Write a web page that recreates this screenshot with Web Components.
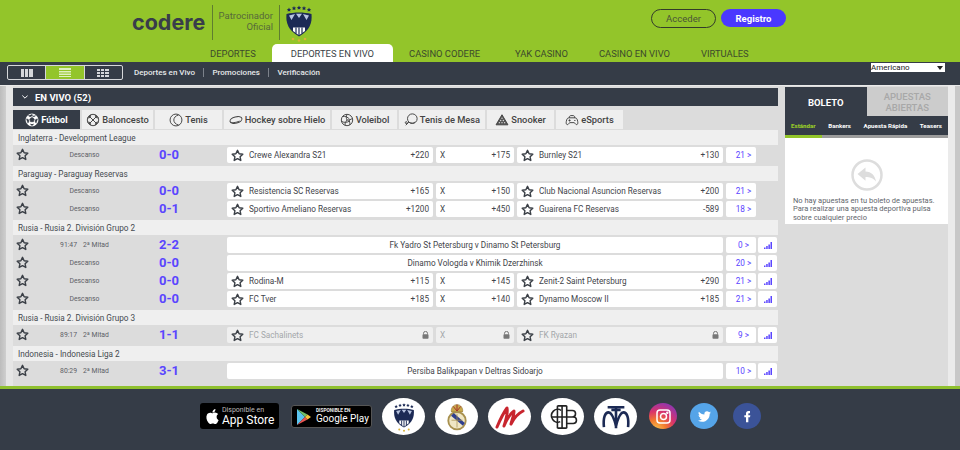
<!DOCTYPE html>
<html lang="es">
<head>
<meta charset="utf-8">
<title>Codere - Deportes en Vivo</title>
<style>
    html, body { margin: 0; height: 100%; overflow: hidden; }
    body { display: flex; flex-direction: column; height: 450px; font-family: Roboto, "Liberation Sans", sans-serif; }
</style>
</head>
<body>
<site-header></site-header>
<sub-bar></sub-bar>
<page-content>
    <live-panel count="52">
        <sport-tabs>
            <sport-tab icon="football" active>Fútbol</sport-tab>
            <sport-tab icon="basket" width="71">Baloncesto</sport-tab>
            <sport-tab icon="tennis">Tenis</sport-tab>
            <sport-tab icon="hockey" width="106">Hockey sobre Hielo</sport-tab>
            <sport-tab icon="volley" width="65">Voleibol</sport-tab>
            <sport-tab icon="paddle" width="86">Tenis de Mesa</sport-tab>
            <sport-tab icon="snooker">Snooker</sport-tab>
            <sport-tab icon="esports">eSports</sport-tab>
        </sport-tabs>
        <league-group name="Inglaterra - Development League">
            <event-row period="Descanso" score="0-0" home="Crewe Alexandra S21" home-odd="+220" draw="+175" away="Burnley S21" away-odd="+130" count="21"></event-row>
        </league-group>
        <league-group name="Paraguay - Paraguay Reservas">
            <event-row period="Descanso" score="0-0" home="Resistencia SC Reservas" home-odd="+165" draw="+150" away="Club Nacional Asuncion Reservas" away-odd="+200" count="21"></event-row>
            <event-row period="Descanso" score="0-1" home="Sportivo Ameliano Reservas" home-odd="+1200" draw="+450" away="Guairena FC Reservas" away-odd="-589" count="18"></event-row>
        </league-group>
        <league-group name="Rusia - Rusia 2. División Grupo 2">
            <event-row time="91:47" period="2ª Mitad" score="2-2" match="Fk Yadro St Petersburg v Dinamo St Petersburg" count="0" stats></event-row>
            <event-row period="Descanso" score="0-0" match="Dinamo Vologda v Khimik Dzerzhinsk" count="20" stats></event-row>
            <event-row period="Descanso" score="0-0" home="Rodina-M" home-odd="+115" draw="+145" away="Zenit-2 Saint Petersburg" away-odd="+290" count="21" stats></event-row>
            <event-row period="Descanso" score="0-0" home="FC Tver" home-odd="+185" draw="+140" away="Dynamo Moscow II" away-odd="+185" count="21" stats></event-row>
        </league-group>
        <league-group name="Rusia - Rusia 2. División Grupo 3">
            <event-row time="89:17" period="2ª Mitad" score="1-1" home="FC Sachalinets" away="FK Ryazan" count="9" stats locked></event-row>
        </league-group>
        <league-group name="Indonesia - Indonesia Liga 2">
            <event-row time="80:29" period="2ª Mitad" score="3-1" match="Persiba Balikpapan v Deltras Sidoarjo" count="10" stats></event-row>
        </league-group>
    </live-panel>
    <bet-slip></bet-slip>
</page-content>
<site-footer></site-footer>

<script>
const DARK = '#353c47';
const BLUE = '#5a45ff';

// Same crest is used in the header and in the footer
const CREST = `
    <path fill="#1c2a55" d="M4 3.500l.7 1.400 1.500.2-1.100 1 .3 1.500L4 6.900l-1.400.7.300-1.500-1.100-1 1.500-.2zM9 2l.7 1.400 1.500.2-1.100 1 .3 1.500L9 5.400l-1.400.7.300-1.500-1.100-1 1.500-.2zM14 1.500l.7 1.400 1.500.2-1.100 1 .3 1.500-1.400-.7-1.400.7.300-1.500-1.100-1 1.500-.2zM19 2l.7 1.400 1.500.2-1.100 1 .3 1.500-1.400-.7-1.400.7.300-1.500-1.100-1 1.500-.2zM24 3.500l.7 1.400 1.500.2-1.100 1 .3 1.500-1.400-.7-1.400.7.300-1.500-1.100-1 1.500-.2z"/>
    <path d="M1.500 10C9 8 19 8 26.500 10c.8 9-1.500 16-12.500 22.500C3 26 .7 19 1.500 10z" fill="#1c2a55"/>
    <path d="M4 11.500l6-1.500-3.500 6zM24 11.500l-6-1.500 3.500 6zM11 9.800h6L14 14z" fill="#b7c3e0"/>
    <path d="M8 23.500h12V27l-6 4.300L8 27z" fill="#fff"/>
    <path d="M11 23.500v6M14 23.500v8M17 23.500v6" stroke="#1c2a55" stroke-width="1.200"/>
    <g fill="#d9b23a"><circle cx="8" cy="35" r="1.300"/><circle cx="14" cy="36.500" r="1.300"/><circle cx="20" cy="35" r="1.300"/></g>`;

const STAR = `<svg width="13" height="13" viewBox="0 0 24 24" fill="none" stroke="#3a3f46" stroke-width="2.600" stroke-linejoin="round"><path d="M12 2.500l3 6.300 6.800.9-5 4.700 1.300 6.800-6.100-3.300-6.100 3.300 1.300-6.800-5-4.700 6.800-.9z"/></svg>`;

const SPORT_ICONS = {
    football: `<circle cx="8" cy="8" r="6.800" fill="#fff" stroke="#fff"/><path d="M8 5l2.600 1.900-1 3H6.400l-1-3zM8 1.300V3l-2 1.200L3.800 3M8 3l2 1.200L12.200 3M14.500 7l-2 .2-1 2 1.200 2.400M1.500 7l2 .2 1 2-1.200 2.400M6 12.500l2 1.800 2-1.800" fill="#353c47" stroke="#353c47" stroke-width=".8"/>`,
    basket: `<circle cx="8" cy="8" r="6.500"/><path d="M3.400 3.400l9.200 9.200M12.600 3.400l-9.200 9.200M5.200 2.200c.4 2.400-.6 3.600-3.600 3.400M10.800 2.200c-.4 2.400.6 3.600 3.600 3.400M5.200 13.800c.4-2.400-.6-3.600-3.600-3.400M10.800 13.800c-.4-2.400.6-3.600 3.600-3.400"/>`,
    tennis: `<circle cx="8" cy="8" r="6.800"/><path d="M11 2.300C7.500 3 5.500 5.500 5.500 8s2 5 5.500 5.700"/>`,
    hockey: `<ellipse cx="8" cy="8" rx="7" ry="3.600" transform="rotate(-15 8 8)"/><path d="M1.500 10c.8 1.600 6.500 1.200 10.500-.8" />`,
    volley: `<circle cx="8" cy="8" r="6.500"/><path d="M8 1.500c-1 2.500-1 4.500 0 6.500M8 8c2 .3 4.500-.4 6.300-2M8 8c-1.400 2-2.500 3.800-2.200 5.900M3 4c2.800-.6 6 .6 8 3.200M1.700 9.500c2.300 1.600 6.200 1.700 9.500-.4M11 13.500c.6-2-.1-4-.9-5.700"/>`,
    paddle: `<circle cx="9.500" cy="6.500" r="5.500"/><path d="M5.600 10.400l-3.600 3.600M6.500 11c2 .8 4 .8 6-.5"/><circle cx="2.600" cy="11" r="1.100"/>`,
    snooker: `<path d="M8 2l6.800 11.500H1.200z" fill="#555"/><g fill="#e0e0e0" stroke="none"><circle cx="8" cy="6" r=".8"/><circle cx="6.500" cy="8.500" r=".8"/><circle cx="9.500" cy="8.500" r=".8"/><circle cx="5" cy="11" r=".8"/><circle cx="8" cy="11" r=".8"/><circle cx="11" cy="11" r=".8"/></g>`,
    esports: `<path d="M4.500 5.500h7c1.800 0 2.500 1.500 3 4 .5 2.600-.2 3.800-1.300 3.800-1.200 0-1.700-2-2.700-2.300H5.500c-1 .3-1.500 2.300-2.700 2.300-1.100 0-1.800-1.200-1.300-3.800.5-2.500 1.200-4 3-4z"/><path d="M5 5.500V4c0-1.500 6-1.500 6 0v1.500M4 8.500h2.400M5.200 7.300v2.400M10.500 8.500h1.500"/>`
};

class SiteHeader extends HTMLElement {
    constructor() {
        super();
        this.attachShadow({ mode: 'open' });
    }

    connectedCallback() {
        this.shadowRoot.innerHTML = `
            <style>
                :host { display: block; flex: none; height: 62px; background: #93c52a; color: #3c4a2c; }
                .top { height: 44px; display: flex; align-items: flex-start; padding-left: 132px; }
                .logo { font: 700 21.500px/26px Inter, sans-serif; color: #383d4a; width: 80px; margin-top: 9px; white-space: nowrap; }
                .rule { width: 1px; height: 35px; background: #5f7d30; margin-top: 5px; }
                .sponsor { width: 60px; margin: 11px 6px 0 0; text-align: right; font-size: 9.500px; line-height: 10.500px; color: #566a3a; }
                svg { margin: 4px 0 0 5px; }
                .auth { margin-left: 338px; margin-top: 9px; display: flex; gap: 5px; font-size: 9.500px; }
                .auth span { width: 65px; height: 19px; box-sizing: border-box; border-radius: 10px; display: flex; align-items: center; justify-content: center; }
                .login { border: 1.500px solid #333c2a; color: #4a5438; }
                .register { background: #4a38ff; color: #fff; font-weight: 700; height: 18px !important; }
                nav { height: 18px; padding-left: 192.500px; display: flex; font-size: 9.400px; }
                nav span { padding: 4px 17.500px 0; box-sizing: border-box; white-space: nowrap; }
                nav .active { background: #fff; border-radius: 5px 5px 0 0; padding: 4px 19px 0; margin: 0 -1.500px; color: #3a3f46; }
                nav span:nth-child(n+4) { padding: 4px 15.500px 0; margin-left: 2px; }
                nav span:nth-child(n+5) { margin-left: 0; }
            </style>
            <div class="top">
                <div class="logo">codere</div>
                <div class="rule"></div>
                <div class="sponsor">Patrocinador Oficial</div>
                <div class="rule"></div>
                <svg width="28" height="38" viewBox="0 0 28 38">${CREST}</svg>
                <div class="auth"><span class="login">Acceder</span><span class="register">Registro</span></div>
            </div>
            <nav>
                <span>DEPORTES</span>
                <span class="active">DEPORTES EN VIVO</span>
                <span>CASINO CODERE</span>
                <span>YAK CASINO</span>
                <span>CASINO EN VIVO</span>
                <span>VIRTUALES</span>
            </nav>
        `;
    }
}

class SubBar extends HTMLElement {
    constructor() {
        super();
        this.attachShadow({ mode: 'open' });
    }

    connectedCallback() {
        this.shadowRoot.innerHTML = `
            <style>
                :host { display: flex; flex: none; height: 23px; background: ${DARK}; color: #e6e8ea; font-size: 8px; font-weight: 500; }
                .views { display: flex; margin: 3px 0 0 7px; width: 116px; height: 15px; box-sizing: border-box; border: 1px solid #d5d7da; border-radius: 2px; }
                .views div { flex: 1; display: flex; align-items: center; justify-content: center; }
                .views div + div { border-left: 1px solid #d5d7da; }
                .views .on { background: #93c52a; }
                .links { display: flex; margin: 3px 0 0 11px; height: 15px; align-items: center; }
                .links span + span { margin-left: 8px; padding-left: 8.500px; border-left: 1px solid #7c828b; }
                .odds { margin: 1px 15px 0 auto; width: 74px; height: 9px; background: #fff; color: #222; font-size: 8px; font-weight: 400; line-height: 10px; display: flex; justify-content: space-between; align-items: center; }
                .odds i { width: 0; height: 0; border: 3.500px solid transparent; border-top: 4px solid #222; border-bottom: 0; margin-right: 2px; }
            </style>
            <div class="views">
                <div><svg width="12" height="8" fill="#d5d7da"><path d="M0 0h3v8H0zM4 0h3v8H4zM8 0h4v8H8z"/></svg></div>
                <div class="on"><svg width="12" height="9" fill="#dff0c0"><path d="M0 0h12v2H0zM0 3h12v1.500H0zM0 5.500h12V7H0zM0 8h12v1H0z"/></svg></div>
                <div><svg width="12" height="8" fill="#d5d7da"><path d="M0 0h3v2H0zM4 0h3v2H4zM8 0h4v2H8zM0 3h3v2H0zM4 3h3v2H4zM8 3h4v2H8zM0 6h3v2H0zM4 6h3v2H4zM8 6h4v2H8z"/></svg></div>
            </div>
            <div class="links"><span>Deportes en Vivo</span><span>Promociones</span><span>Verificación</span></div>
            <div class="odds">Americano<i></i></div>
        `;
    }
}

class PageContent extends HTMLElement {
    constructor() {
        super();
        this.attachShadow({ mode: 'open' });
        this.shadowRoot.innerHTML = `
            <style>
                :host {
                    display: flex; flex: 1; min-height: 0; gap: 7px;
                    padding: 2px 12px 0 13px;
                    background: linear-gradient(90deg, #bcbcbc 0, #cfcfcf 6px, #e6e6e6 6px, #e6e6e6 13px, #dcdcdc 13px, #dcdcdc 948px, #ebebeb 948px, #ebebeb 955px, #c8c8c8 955px);
                    border-top: 1px solid #e9e9e9;
                }
            </style>
            <slot></slot>
        `;
    }
}

class LivePanel extends HTMLElement {
    constructor() {
        super();
        this.attachShadow({ mode: 'open' });
    }

    connectedCallback() {
        this.shadowRoot.innerHTML = `
            <style>
                :host { display: block; width: 765px; flex: none; overflow: hidden; }
                .title { height: 18px; background: ${DARK}; color: #fff; font-size: 9.500px; font-weight: 700; display: flex; align-items: center; gap: 7px; padding-left: 9px; }
            </style>
            <div class="title">
                <svg width="6" height="4" viewBox="0 0 6 4" fill="none" stroke="#fff"><path d="M.3.5L3 3.200 5.700.5"/></svg>
                EN VIVO (${this.getAttribute('count')})
            </div>
            <slot></slot>
        `;
    }
}

class SportTabs extends HTMLElement {
    constructor() {
        super();
        this.attachShadow({ mode: 'open' });
        this.shadowRoot.innerHTML = `
            <style>:host { display: flex; gap: 2px; margin-top: 4px; height: 19px; }</style>
            <slot></slot>
        `;
    }
}

class SportTab extends HTMLElement {
    constructor() {
        super();
        this.attachShadow({ mode: 'open' });
    }

    connectedCallback() {
        const active = this.hasAttribute('active');
        const stroke = active ? '#fff' : '#444';
        this.shadowRoot.innerHTML = `
            <style>
                :host {
                    display: flex; align-items: center; justify-content: center; gap: 2px; flex: none;
                    width: ${this.getAttribute('width') || 67}px;
                    background: ${active ? DARK : '#efefef'};
                    color: ${active ? '#fff' : '#444'};
                    font-size: 9.300px; font-weight: ${active ? 700 : 500};
                    white-space: nowrap;
                }
            </style>
            <svg width="14" height="14" viewBox="0 0 16 16" fill="none" stroke="${stroke}" stroke-width="1.100">${SPORT_ICONS[this.getAttribute('icon')]}</svg>
            <slot></slot>
        `;
    }
}

class LeagueGroup extends HTMLElement {
    constructor() {
        super();
        this.attachShadow({ mode: 'open' });
    }

    connectedCallback() {
        this.shadowRoot.innerHTML = `
            <style>
                :host { display: block; }
                .name { height: 15px; margin-top: 1px; background: #efefef; color: #454a50; font-size: 8.200px; line-height: 16px; padding-left: 5px; }
                .rows { padding: 2px 0 2px; display: flex; flex-direction: column; gap: 2px; }
            </style>
            <div class="name">${this.getAttribute('name')}</div>
            <div class="rows"><slot></slot></div>
        `;
    }
}

class EventRow extends HTMLElement {
    constructor() {
        super();
        this.attachShadow({ mode: 'open' });
    }

    pick(name, odd, locked, star = true) {
        const lock = `<svg width="7" height="8" viewBox="0 0 7 8"><path d="M1.500 3.500V2.400a2 2 0 014 0v1.100" fill="none" stroke="#777"/><rect y="3.300" x=".5" width="6" height="4.500" rx=".7" fill="#777"/></svg>`;
        return `
            <div class="btn pick ${locked ? 'locked' : ''}">
                ${star ? STAR : ''}
                <span class="name">${name}</span>
                ${locked ? lock : `<span>${odd}</span>`}
            </div>`;
    }

    connectedCallback() {
        const attr = n => this.getAttribute(n);
        const locked = this.hasAttribute('locked');
        const middle = attr('match')
            ? `<div class="btn match">${attr('match')}</div>`
            : this.pick(attr('home'), attr('home-odd'), locked)
                + this.pick('X', attr('draw'), locked, false)
                + this.pick(attr('away'), attr('away-odd'), locked);
        const time = attr('time');
        this.shadowRoot.innerHTML = `
            <style>
                :host {
                    display: grid; height: 16px; color: #3f444a; font-size: 8.200px;
                    grid-template-columns: 211px 206px 78px 206px 30px 18px;
                    column-gap: 3px;
                    width: 765px;
                }
                .info { display: grid; grid-template-columns: 15px 113px 56px; align-items: center; min-width: 0; }
                .info svg { margin: -1px 0 0 3px; }
                .clock { display: flex; justify-content: center; gap: 6px; font-size: 6.800px; color: #5c6066; }
                .clock span { white-space: nowrap; }
                .score { text-align: center; color: ${BLUE}; font-size: 13px; font-weight: 700; line-height: 16px; }
                .btn { background: #fff; border-radius: 2px; display: flex; align-items: center; min-width: 0; }
                .pick { padding: 0 4px; gap: 5px; }
                .pick .name { flex: 1; white-space: nowrap; overflow: hidden; }
                .locked { background: #efefef; color: #a4a7aa; }
                .match { grid-column: 2 / 5; justify-content: center; }
                .count { justify-content: center; color: ${BLUE}; padding-left: 5px; }
                .stats { justify-content: center; margin-left: -1px; }
            </style>
            <div class="info">
                ${STAR}
                <div class="clock">${time ? `<span>${time}</span>` : ''}<span>${attr('period')}</span></div>
                <div class="score">${attr('score')}</div>
            </div>
            ${middle}
            <div class="btn count">${attr('count')} &gt;</div>
            ${this.hasAttribute('stats') ? `<div class="btn stats"><svg width="8" height="7" fill="${BLUE}"><path d="M0 5.500h1.500V7H0zM2.200 4h1.500v3H2.200zM4.400 2.500h1.500V7H4.400zM6.500 0H8v7H6.500z"/></svg></div>` : ''}
        `;
    }
}

class BetSlip extends HTMLElement {
    constructor() {
        super();
        this.attachShadow({ mode: 'open' });
    }

    connectedCallback() {
        this.shadowRoot.innerHTML = `
            <style>
                :host { display: block; width: 163px; flex: none; margin-top: -1px; }
                .tabs { display: flex; height: 29px; }
                .tabs div { flex: 1; display: flex; align-items: center; justify-content: center; text-align: center; font-size: 9.500px; line-height: 11px; padding-top: 1px; }
                .boleto { background: ${DARK}; color: #fff; font-weight: 700; }
                .open { background: #ccc; color: #a8a8a8; font-weight: 500; }
                .modes { height: 19px; background: ${DARK}; display: flex; justify-content: space-between; align-items: center; padding: 0 6px; color: #fff; font-size: 6.200px; font-weight: 700; white-space: nowrap; }
                .modes b { color: #93c52a; }
                .line { height: 3px; background: linear-gradient(90deg, #93c52a 37px, #9c9c9c 37px); }
                .body { height: 86px; background: #fff; box-sizing: border-box; padding: 21px 8px 0; color: #62666c; font-size: 7.500px; line-height: 8.400px; }
                svg { display: block; margin: 0 auto 6px; }
            </style>
            <div class="tabs"><div class="boleto">BOLETO</div><div class="open">APUESTAS ABIERTAS</div></div>
            <div class="modes"><b>Estándar</b><span>Bankers</span><span>Apuesta Rápida</span><span>Teasers</span></div>
            <div class="line"></div>
            <div class="body">
                <svg width="32" height="32" viewBox="0 0 32 32" fill="none"><circle cx="16" cy="16" r="14.500" stroke="#ddd" stroke-width="2.500"/><path d="M6.500 15l8-6.500v4c6 .3 9.500 4 10.500 10-3-3.500-6-4.500-10.500-4.500v3.800z" fill="#ddd"/></svg>
                No hay apuestas en tu boleto de apuestas. Para realizar una apuesta deportiva pulsa sobre cualquier precio
            </div>
        `;
    }
}

class SiteFooter extends HTMLElement {
    constructor() {
        super();
        this.attachShadow({ mode: 'open' });
    }

    connectedCallback() {
        const apple = 'M12.152 6.896c-.948 0-2.415-1.078-3.96-1.04-2.04.027-3.91 1.183-4.961 3.014-2.117 3.675-.546 9.103 1.519 12.09 1.013 1.454 2.208 3.09 3.792 3.039 1.52-.065 2.09-.987 3.935-.987 1.831 0 2.35.987 3.96.948 1.637-.026 2.676-1.48 3.676-2.948 1.156-1.688 1.636-3.325 1.662-3.415-.039-.013-3.182-1.221-3.22-4.857-.026-3.04 2.48-4.494 2.597-4.559-1.429-2.09-3.623-2.324-4.39-2.376-2-.156-3.675 1.09-4.61 1.09zM15.53 3.83c.843-1.012 1.4-2.427 1.245-3.83-1.207.052-2.662.805-3.532 1.818-.78.896-1.454 2.338-1.273 3.714 1.338.104 2.715-.688 3.559-1.701';
        const bird = 'M23.953 4.57a10 10 0 01-2.825.775 4.958 4.958 0 002.163-2.723c-.951.555-2.005.959-3.127 1.184a4.92 4.92 0 00-8.384 4.482C7.69 8.095 4.067 6.13 1.64 3.162a4.822 4.822 0 00-.666 2.475c0 1.71.87 3.213 2.188 4.096a4.904 4.904 0 01-2.228-.616v.06a4.923 4.923 0 003.946 4.827 4.996 4.996 0 01-2.212.085 4.936 4.936 0 004.604 3.417 9.867 9.867 0 01-6.102 2.105c-.39 0-.779-.023-1.17-.067a13.995 13.995 0 007.557 2.209c9.053 0 13.998-7.496 13.998-13.985 0-.21 0-.42-.015-.63A9.935 9.935 0 0024 4.59z';
        this.shadowRoot.innerHTML = `
            <style>
                :host { display: flex; flex: none; height: 64px; box-sizing: border-box; border-top: 3px solid #8fc02f; background: ${DARK}; padding-left: 200px; align-items: flex-start; }
                .badge { background: #000; border-radius: 3px; color: #fff; display: flex; align-items: center; box-sizing: border-box; }
                .apple { width: 79px; height: 26px; margin-top: 14px; gap: 2px; padding-left: 5px; }
                .play { width: 81px; height: 23px; margin: 16px 10px 0 12px; gap: 5px; padding-left: 5px; border: 1px solid #555; }
                .badge small { display: block; font-size: 7px; line-height: 7px; color: #bbb; }
                .badge b { display: block; font-weight: 400; white-space: nowrap; }
                .apple b { font-size: 12px; line-height: 12px; }
                .play b { font-size: 10px; line-height: 10.500px; }
                .play small { font-size: 4.800px; line-height: 6px; font-weight: 700; color: #eee; }
                .club { width: 43px; height: 37px; margin: 9px 10px 0 0; background: #fff; border-radius: 50%; display: flex; align-items: center; justify-content: center; flex: none; }
                .social { width: 28px; height: 26px; margin: 14px 15px 0 0; border-radius: 50%; display: flex; align-items: center; justify-content: center; flex: none; }
                .insta { margin-left: 2px; margin-right: 13px; background: radial-gradient(circle at 25% 105%, #f9c74f 0, #f2792e 30%, #d9336b 55%, #8f36b0 85%, #5a4bbf 100%); }
                .tw { background: #55a4e8; }
                .fb { background: #3b5398; }
            </style>
            <div class="badge apple">
                <svg width="15" height="17" viewBox="0 0 24 24" fill="#fff"><path d="${apple}"/></svg>
                <div><small>Disponible en</small><b>App Store</b></div>
            </div>
            <div class="badge play">
                <svg width="14" height="16" viewBox="0 0 14 16"><path d="M0 0l8 8-8 8z" fill="#5bc4ee"/><path d="M0 0l10.500 5.500L8 8z" fill="#6fbf67"/><path d="M0 16l10.500-5.500L8 8z" fill="#e8534f"/><path d="M10.500 5.500L14 8l-3.500 2.500L8 8z" fill="#f5c33b"/></svg>
                <div><small>DISPONIBLE EN</small><b>Google Play</b></div>
            </div>
            <div class="club"><svg width="22" height="30" viewBox="0 0 28 38">${CREST}</svg></div>
            <div class="club">
                <svg width="22" height="30" viewBox="0 0 24 31" fill="none">
                    <path d="M6 10C5 6 8 2 12 2s7 4 6 8z" fill="#c9a94a" stroke="#8d6f2c" stroke-width=".7"/>
                    <path d="M8 4l4 5 4-5M12 2v7" stroke="#a32b2b" stroke-width="1"/>
                    <circle cx="12" cy="19.500" r="9.500" fill="#efe6c4" stroke="#a8914f" stroke-width="2"/>
                    <path d="M5.500 14l13 11 2-3-12-11z" fill="#2f3f8f"/>
                    <path d="M12 12v15M6 19h12" stroke="#a8914f" stroke-width=".8"/>
                </svg>
            </div>
            <div class="club">
                <svg width="30" height="24" viewBox="0 0 30 24" fill="none" stroke="#c8252e" stroke-linecap="round" stroke-linejoin="round">
                    <path d="M2 22C5 15 9 7 12 3c1 5-1 12-3 18 3-7 7-13 10-15 0 4-2 9-3 13 2-4 6-10 12-13" stroke-width="3"/>
                </svg>
            </div>
            <div class="club">
                <svg width="30" height="26" viewBox="0 0 32 28" fill="none" stroke="#222" stroke-width="1.700">
                    <path d="M14 7a6.500 7 0 10-1 12"/>
                    <path d="M10 2v24M15 2v24M20 2v24M10 2h10M10 26h10"/>
                    <path d="M20 7h6a3.500 3.500 0 010 7h-6M20 14h7a3.500 3.500 0 010 7h-7M3 14h26"/>
                </svg>
            </div>
            <div class="club">
                <svg width="30" height="26" viewBox="0 0 32 28" fill="none" stroke="#1c2a55" stroke-width="2.800" stroke-linejoin="round">
                    <path d="M3 25C2 15 4 9 8 9c3 0 6 7 8 14 2-7 5-14 8-14 4 0 6 6 5 16"/>
                    <path d="M7 3.500h18M16 3.500V26M11 6.500h10"/>
                </svg>
            </div>
            <div class="social insta">
                <svg width="15" height="15" viewBox="0 0 15 15" fill="none" stroke="#fff" stroke-width="1.500"><rect x="1" y="1" width="13" height="13" rx="3"/><circle cx="7.500" cy="7.500" r="3"/><circle cx="11.300" cy="3.700" r=".5" fill="#fff"/></svg>
            </div>
            <div class="social tw"><svg width="15" height="13" viewBox="0 0 24 24" fill="#fff"><path d="${bird}"/></svg></div>
            <div class="social fb"><svg width="16" height="16" viewBox="0 0 24 24" fill="#fff"><path d="M14 8h2.500V4.500H14c-2.200 0-3.500 1.500-3.500 3.500v3H8v3h2.500v7.500h3.500V14h2.500l.5-3h-3V8.700c0-.4.200-.7.500-.7z"/></svg></div>
        `;
    }
}

customElements.define('site-header', SiteHeader);
customElements.define('sub-bar', SubBar);
customElements.define('page-content', PageContent);
customElements.define('live-panel', LivePanel);
customElements.define('sport-tabs', SportTabs);
customElements.define('sport-tab', SportTab);
customElements.define('league-group', LeagueGroup);
customElements.define('event-row', EventRow);
customElements.define('bet-slip', BetSlip);
customElements.define('site-footer', SiteFooter);
</script>
</body>
</html>
